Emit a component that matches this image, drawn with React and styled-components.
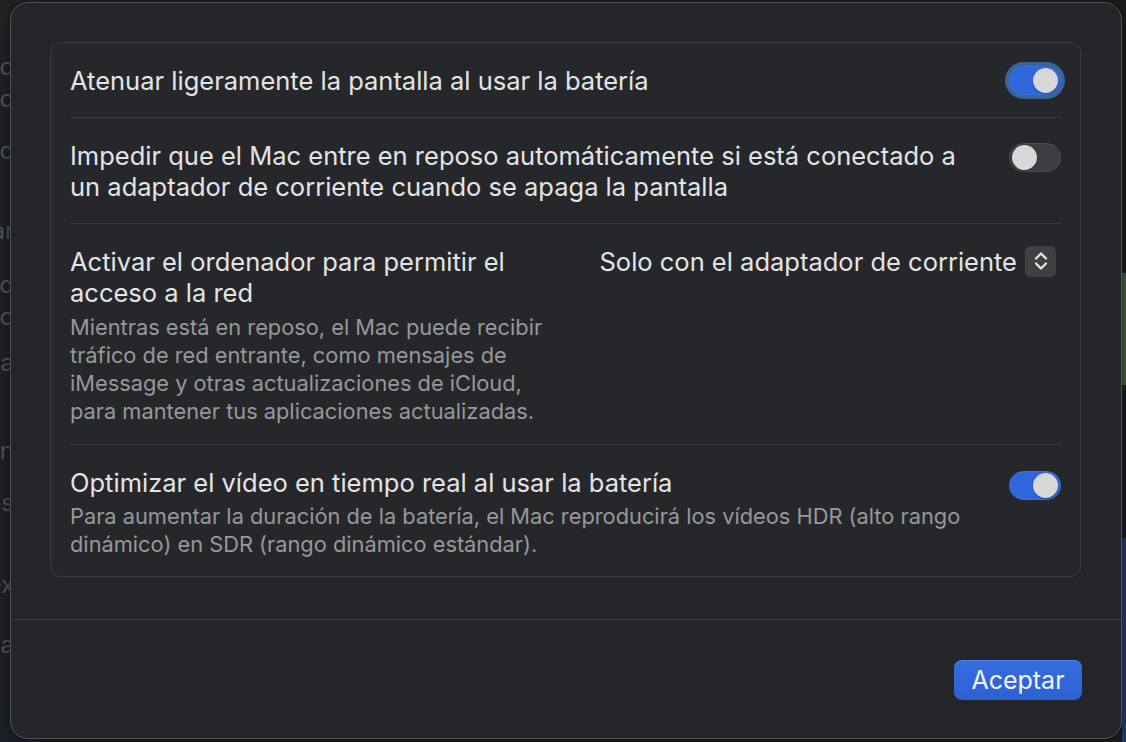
import React from "react";
import styled, { createGlobalStyle } from "styled-components";

const GlobalStyle = createGlobalStyle`
	html, body {
		margin: 0;
		padding: 0;
		background: #18191b;
	}
	body {
		font-family: "Inter", "Noto Sans", "Liberation Sans", sans-serif;
		-webkit-font-smoothing: antialiased;
	}
`;

const Screen = styled.div`
	position: relative;
	width: 1126px;
	height: 742px;
	overflow: hidden;
	background: #1b1c1f;
`;

// window behind the sheet, only its edges show
const Backdrop = styled.div`
	display: flex;
	justify-content: space-between;
	height: 100%;
`;

const BackList = styled.div`
	width: 40px;
	display: flex;
	flex-direction: column;
	background: linear-gradient(#222326 0, #222326 40px, #1d2025 40px, #1c2027 100%);
	padding-top: 52px;
	box-sizing: border-box;
`;

const BackLine = styled.div`
	display: flex;
	justify-content: flex-end;
	white-space: nowrap;
	overflow: hidden;
	height: ${(p) => p.$h}px;
	font-size: 24px;
	line-height: 30px;
	color: #505256;
	padding-right: 26px;
`;

const BackStrip = styled.div`
	width: 4px;
	display: flex;
	flex-direction: column;
	background: #1a1b1e;
`;

const StripBlock = styled.div`
	height: ${(p) => p.$h}px;
	background: ${(p) => p.$c};
	flex: ${(p) => (p.$grow ? 1 : "none")};
`;

const Sheet = styled.div`
	position: absolute;
	left: 10px;
	top: 2px;
	width: 1112px;
	height: 737px;
	box-sizing: border-box;
	background: #232529;
	border: 1px solid #505256;
	border-radius: 18px;
	display: flex;
	flex-direction: column;
	box-shadow: 0 0 12px rgba(0, 0, 0, 0.5);
`;

const Body = styled.div`
	padding: 39px 40px 0 39px;
	flex: 0 0 auto;
`;

const Card = styled.div`
	background: #25272a;
	border: 1px solid #3a3c3f;
	border-radius: 10px;
	padding: 0 19px 0 19px;
`;

const Row = styled.div`
	display: flex;
	align-items: ${(p) => (p.$center ? "center" : "flex-start")};
	justify-content: space-between;
	gap: 24px;
	padding: ${(p) => p.$pad || "22px 0 20px"};
	border-top: ${(p) => (p.$first ? "none" : "1px solid #3a3c3f")};
`;

const TextBlock = styled.div`
	display: flex;
	flex-direction: column;
`;

const Title = styled.div`
	font-size: 25.5px;
	line-height: 31.5px;
	color: #e4e4e5;
`;

const Note = styled.div`
	margin-top: 4px;
	font-size: 21.8px;
	line-height: 28px;
	color: #97989b;
`;

const Track = styled.div`
	flex: none;
	width: 52px;
	height: 29px;
	box-sizing: border-box;
	border-radius: 15px;
	padding: 2px;
	display: flex;
	justify-content: ${(p) => (p.$on ? "flex-end" : "flex-start")};
	align-items: center;
	background: ${(p) => (p.$on ? "#2f66db" : "#3b3d40")};
	border: 1px solid ${(p) => (p.$on ? "#3a70e0" : "#4b4d50")};
	box-shadow: ${(p) => (p.$focus ? "0 0 0 4px #3a6396" : "none")};
	margin-top: ${(p) => p.$mt || 0}px;
`;

const Knob = styled.div`
	width: 25px;
	height: 25px;
	border-radius: 50%;
	background: #d7d7d8;
	box-shadow: 0 1px 2px rgba(0, 0, 0, 0.3);
`;

const Toggle = ({ on, focus, mt }) => (
	<Track $on={on} $focus={focus} $mt={mt}>
		<Knob />
	</Track>
);

const Popup = styled.div`
	flex: none;
	display: flex;
	align-items: center;
	gap: 8px;
	margin-right: 5px;
	font-size: 25.5px;
	line-height: 31.5px;
	color: #e4e4e5;
`;

const Stepper = styled.div`
	width: 31px;
	height: 31px;
	border-radius: 6px;
	background: #3e4043;
	display: flex;
	align-items: center;
	justify-content: center;
`;

const Footer = styled.div`
	margin-top: 42px;
	border-top: 1px solid #3a3c3f;
	flex: 1;
	display: flex;
	justify-content: flex-end;
	align-items: flex-start;
	padding: 40px 39px 0 0;
`;

const Button = styled.button`
	width: 128px;
	height: 40px;
	border: none;
	border-radius: 8px;
	background: linear-gradient(#356ce0, #2c61d4);
	box-shadow: inset 0 1px 0 rgba(255, 255, 255, 0.15);
	color: #f2f4fa;
	font-family: inherit;
	font-size: 25px;
	padding: 0;
	cursor: pointer;
`;

const backLines = [
	["Reducir brillo", 32],
	["Modo de bajo co", 52],
	["Reposo automático", 80],
	["Actualizar", 54],
	["Intensidad", 32],
	["Ahorro", 46],
	["Pantalla", 88],
	["Volumen", 52],
	["Notificaciones", 82],
	["Índex", 60],
	["Búsqueda", 40],
];

export default function App() {
	return (
		<>
			<GlobalStyle />
			<Screen>
				<Backdrop>
					<BackList>
						{backLines.map(([t, h]) => (
							<BackLine key={t} $h={h}>
								{t}
							</BackLine>
						))}
					</BackList>
					<BackStrip>
						<StripBlock $h={273} $c="#1c1d20" />
						<StripBlock $h={112} $c="#3f5e39" />
						<StripBlock $h={153} $c="#1b1d21" />
						<StripBlock $grow $c="#24396a" />
					</BackStrip>
				</Backdrop>

				<Sheet>
					<Body>
						<Card>
							<Row $first $center>
								<Title>Atenuar ligeramente la pantalla al usar la batería</Title>
								<Toggle on focus />
							</Row>
							<Row $pad="22px 0 20px">
								<TextBlock>
									<Title>
										Impedir que el Mac entre en reposo automáticamente si está conectado a
										<br />
										un adaptador de corriente cuando se apaga la pantalla
									</Title>
								</TextBlock>
								<Toggle mt={3} />
							</Row>
							<Row $pad="22px 0 19px">
								<TextBlock>
									<Title>
										Activar el ordenador para permitir el
										<br />
										acceso a la red
									</Title>
									<Note>
										Mientras está en reposo, el Mac puede recibir
										<br />
										tráfico de red entrante, como mensajes de
										<br />
										iMessage y otras actualizaciones de iCloud,
										<br />
										para mantener tus aplicaciones actualizadas.
									</Note>
								</TextBlock>
								<Popup>
									Solo con el adaptador de corriente
									<Stepper>
										<svg width="16" height="22" viewBox="0 0 16 22" fill="none">
											<path
												d="M3 8.5 L8 3.5 L13 8.5 M3 13.5 L8 18.5 L13 13.5"
												stroke="#e8e8e9"
												strokeWidth="2.2"
												strokeLinecap="round"
												strokeLinejoin="round"
											/>
										</svg>
									</Stepper>
								</Popup>
							</Row>
							<Row $pad="22px 0 18px">
								<TextBlock>
									<Title>Optimizar el vídeo en tiempo real al usar la batería</Title>
									<Note>
										Para aumentar la duración de la batería, el Mac reproducirá los vídeos HDR (alto rango
										<br />
										dinámico) en SDR (rango dinámico estándar).
									</Note>
								</TextBlock>
								<Toggle on mt={4} />
							</Row>
						</Card>
					</Body>
					<Footer>
						<Button>Aceptar</Button>
					</Footer>
				</Sheet>
			</Screen>
		</>
	);
}
